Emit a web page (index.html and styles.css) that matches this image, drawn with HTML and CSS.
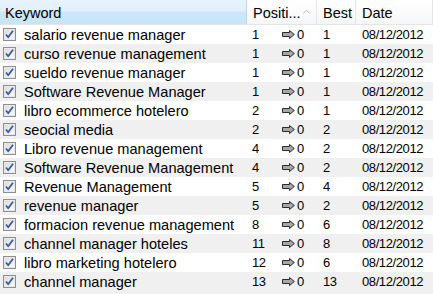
FILE: index.html
```html
<!DOCTYPE html>
<html>
<head>
<meta charset="utf-8">
<link rel="stylesheet" href="styles.css">
</head>
<body>
<div class="grid">
  <div class="head">
    <div class="hcell hkey">Keyword</div>
    <div class="hcell hpos">Positi...<svg class="sort" width="7" height="5" viewBox="0 0 7 5"><path d="M0.5 4.5 L3.5 1 L6.5 4.5" fill="none" stroke="#b9bec4" stroke-width="1"/></svg></div>
    <div class="hcell">Best</div>
    <div class="hcell">Date</div>
  </div>
  <div class="rows" id="rows"></div>
</div>
<template id="chk"><svg class="chk" width="13" height="13" viewBox="0 0 13 13"><defs><linearGradient id="cg" x1="0" y1="0" x2="1" y2="1"><stop offset="0" stop-color="#dcdcdc"/><stop offset="1" stop-color="#fbfbfb"/></linearGradient></defs><rect x="0.5" y="0.5" width="12" height="12" fill="#f4f4f4" stroke="#8f8f8f"/><rect x="1.5" y="1.5" width="10" height="10" fill="url(#cg)" stroke="#e8e8e8"/><path d="M3 6.5 L5.2 9.3 L10 2.8" fill="none" stroke="#3b5aa5" stroke-width="1.8" stroke-linejoin="round"/></svg></template>
<template id="arr"><svg class="arr" width="13" height="9" viewBox="0 0 13 9"><path d="M0.5 2.5 H7.5 V0.5 L12.3 4.5 L7.5 8.5 V6.5 H0.5 Z" fill="#a7a7a7" stroke="#2b2b2b" stroke-width="1" stroke-linejoin="miter"/></svg></template>
<script>
const data = [
["salario revenue manager",1,1],
["curso revenue management",1,1],
["sueldo revenue manager",1,1],
["Software Revenue Manager",1,1],
["libro ecommerce hotelero",2,1],
["seocial media",2,2],
["Libro revenue management",4,2],
["Software Revenue Management",4,2],
["Revenue Management",5,4],
["revenue manager",5,2],
["formacion revenue management",8,6],
["channel manager hoteles",11,8],
["libro marketing hotelero",12,6],
["channel manager",13,13]
];
const rows = document.getElementById('rows');
const chk = document.getElementById('chk').innerHTML;
const arr = document.getElementById('arr').innerHTML;
data.forEach((d, i) => {
  const r = document.createElement('div');
  r.className = 'row' + (i % 2 ? ' alt' : '');
  r.innerHTML = '<div class="cell key">' + chk + '<span class="kw">' + d[0] + '</span></div>' +
    '<div class="cell pos num"><span class="p">' + d[1] + '</span>' + arr + '<span class="z">0</span></div>' +
    '<div class="cell num">' + d[2] + '</div>' +
    '<div class="cell num">08/12/2012</div>';
  rows.appendChild(r);
});
const last = document.createElement('div');
last.className = 'row alt';
last.innerHTML = '<div class="cell key">' + chk + '</div><div></div><div></div><div></div>';
rows.appendChild(last);
</script>
</body>
</html>
```
FILE: styles.css
```css
html, body {
  margin: 0;
  padding: 0;
  background: #fff;
}
body {
  width: 433px;
  height: 294px;
  overflow: hidden;
  font-family: "Liberation Sans", Arial, sans-serif;
  font-size: 14px;
  color: #000;
}
.grid {
  display: flex;
  flex-direction: column;
}
.head,
.row {
  display: grid;
  grid-template-columns: 247px 70px 39px 77px;
}
.head {
  height: 24px;
  border-bottom: 1px solid #e5e5e5;
  background: linear-gradient(#ffffff, #fbfbfb 50%, #f5f6f7);
  font-size: 14.5px;
}
.hcell {
  display: flex;
  align-items: center;
  padding-left: 6px;
  border-right: 1px solid #e3e5e8;
  line-height: 1;
  padding-top: 2px;
}
.hkey {
  padding-left: 5px;
  background: linear-gradient(#e6f3fd 0%, #e2f0fc 45%, #cde7fa 50%, #c8e4f9 100%);
  border-right: 1px solid #b9d9f1;
}
.hpos {
  position: relative;
}
.sort {
  position: absolute;
  left: 56px;
  top: 9px;
}
.row {
  height: 19px;
  align-items: center;
}
.row.alt {
  background: #f0f0f0;
}
.cell {
  display: flex;
  align-items: center;
  padding-left: 6px;
  white-space: nowrap;
  overflow: hidden;
}
.key {
  padding-left: 3px;
  font-size: 14.6px;
}
.chk {
  flex: none;
  margin-right: 8px;
}
.num {
  font-size: 13px;
  letter-spacing: -0.4px;
}
.pos {
  padding-left: 5px;
}
.p {
  width: 30px;
}
.arr {
  flex: none;
  margin-right: 2px;
}
```
